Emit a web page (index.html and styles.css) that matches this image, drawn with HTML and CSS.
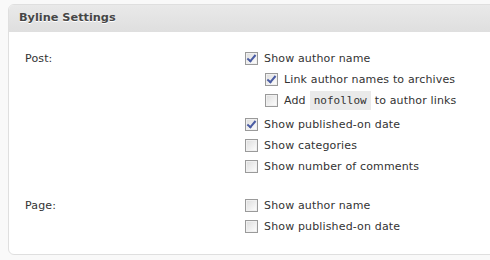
FILE: index.html
```html
<!DOCTYPE html>
<html lang="en">
<head>
  <meta charset="UTF-8" />
  <title>Byline Settings</title>
  <link rel="stylesheet" href="styles.css">
</head>
<body>
  <div class="postbox">
    <h3 class="hndle">Byline Settings</h3>
    <div class="inside">
      <div class="setting">
        <div class="label">Post:</div>
        <div class="options">
          <label class="opt"><span class="cb checked"></span>Show author name</label>
          <div class="sub">
            <label class="opt"><span class="cb checked"></span>Link author names to archives</label>
            <label class="opt"><span class="cb"></span>Add <code>nofollow</code> to author links</label>
          </div>
          <label class="opt"><span class="cb checked"></span>Show published-on date</label>
          <label class="opt"><span class="cb"></span>Show categories</label>
          <label class="opt"><span class="cb"></span>Show number of comments</label>
        </div>
      </div>
      <div class="setting">
        <div class="label">Page:</div>
        <div class="options">
          <label class="opt"><span class="cb"></span>Show author name</label>
          <label class="opt"><span class="cb"></span>Show published-on date</label>
        </div>
      </div>
    </div>
  </div>
</body>
</html>
```

FILE: styles.css
```css
body {
  margin: 0;
  padding: 4px 0 0 8px;
  background: #f9f9f9;
  font-family: "DejaVu Sans", Verdana, sans-serif;
  font-size: 11px;
  letter-spacing: 0.15px;
  color: #333;
}
.postbox {
  width: 520px;
  height: 249px;
  background: #fff;
  border: 1px solid #dfdfdf;
  border-radius: 6px;
  overflow: hidden;
}
.hndle {
  margin: 0;
  height: 26px;
  line-height: 26px;
  padding-left: 10px;
  font-size: 11.3px;
  letter-spacing: 0;
  font-weight: bold;
  color: #464646;
  background: linear-gradient(to bottom, #e9e9e9, #dfdfdf);
  border-bottom: 1px solid #dfdfdf;
  text-shadow: 0 1px 0 #fff;
}
.inside {
  padding: 16px 0 0 16px;
}
.setting {
  display: grid;
  grid-template-columns: 220px 1fr;
  margin-bottom: 18px;
}
.label {
  line-height: 21px;
}
.options {
  display: flex;
  flex-direction: column;
}
.opt {
  display: flex;
  align-items: center;
  height: 21px;
  gap: 6px;
}
.sub {
  padding-left: 20px;
  margin-bottom: 3px;
}
.cb {
  width: 11px;
  height: 11px;
  border: 1px solid #9a9a9a;
  background: linear-gradient(135deg, #dcdcdc, #fff);
  box-shadow: inset 0 0 0 1px #f0f0f0;
  position: relative;
  flex: none;
}
.cb.checked::after {
  content: "";
  position: absolute;
  left: 3px;
  top: 0px;
  width: 3px;
  height: 7px;
  border: solid #4a5ca3;
  border-width: 0 2px 2px 0;
  transform: rotate(40deg);
}
code {
  font-family: "DejaVu Sans Mono", monospace;
  font-size: 11px;
  letter-spacing: 0;
  background: #eaeaea;
  padding: 3px 4px;
  margin: 0 -2px;
}
```
